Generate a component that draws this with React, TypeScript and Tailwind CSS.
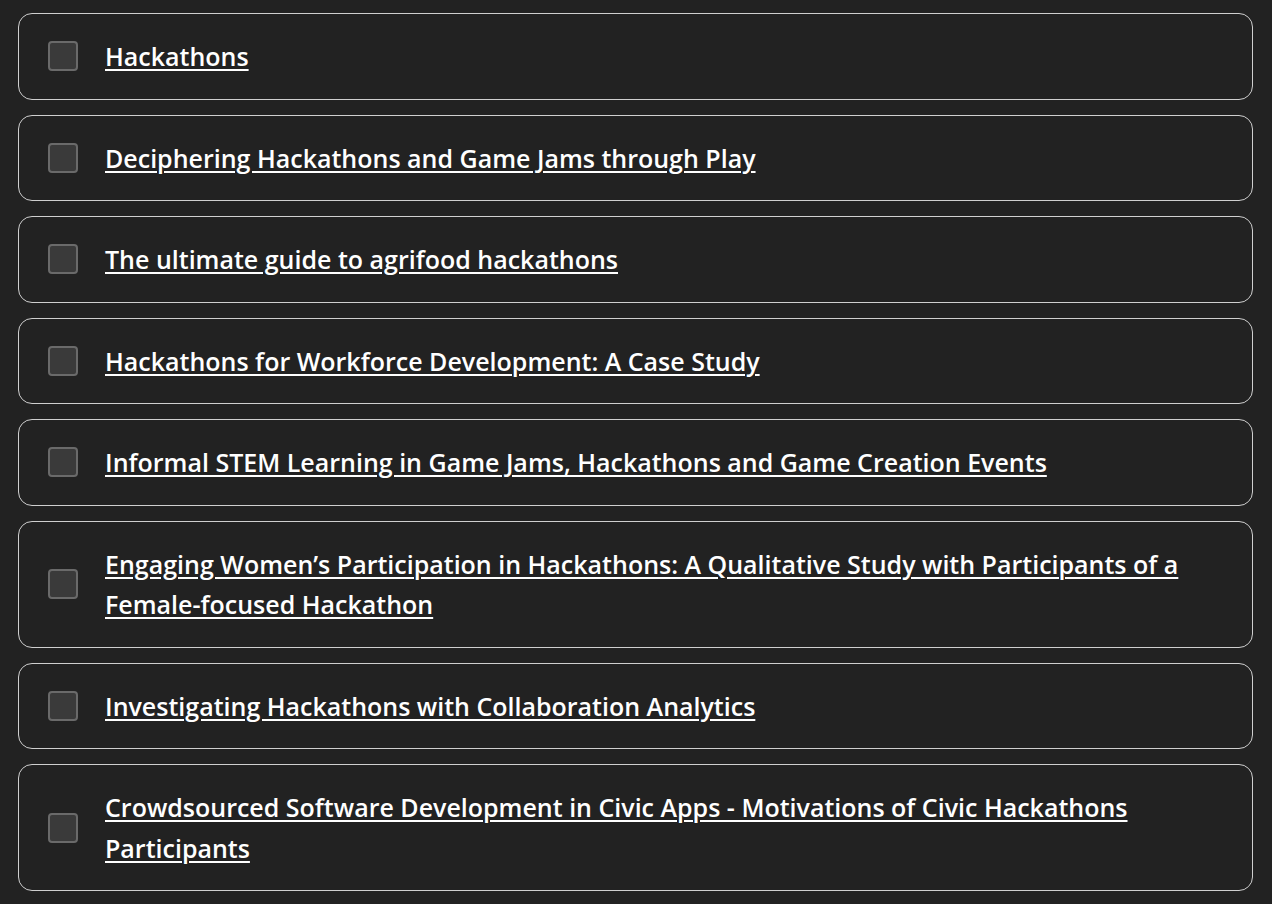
import React from "react";

const items: string[] = [
  "Hackathons",
  "Deciphering Hackathons and Game Jams through Play",
  "The ultimate guide to agrifood hackathons",
  "Hackathons for Workforce Development: A Case Study",
  "Informal STEM Learning in Game Jams, Hackathons and Game Creation Events",
  "Engaging Women’s Participation in Hackathons: A Qualitative Study with Participants of a Female-focused Hackathon",
  "Investigating Hackathons with Collaboration Analytics",
  "Crowdsourced Software Development in Civic Apps - Motivations of Civic Hackathons Participants",
];

export default function App() {
  return (
    <div className="min-h-screen bg-[#222222] pt-[13px] pb-[14px] pl-[18px] pr-[19px] flex flex-col gap-[15px]" style={{ fontFamily: '"Open Sans", "Noto Sans", sans-serif' }}>
      {items.map((t) => (
        <div key={t} className="flex items-center border border-[#cfcfcf] rounded-[14px] py-[22px] pl-[29px] pr-[60px]">
          <div className="w-[30px] h-[30px] shrink-0 rounded-[4px] bg-[#3a3a3a] border-2 border-[#6a6a6a]" />
          <a href="#" className="ml-[27px] text-white font-semibold text-[25px] leading-[40.5px] underline underline-offset-[3px] decoration-2">
            {t}
          </a>
        </div>
      ))}
    </div>
  );
}
